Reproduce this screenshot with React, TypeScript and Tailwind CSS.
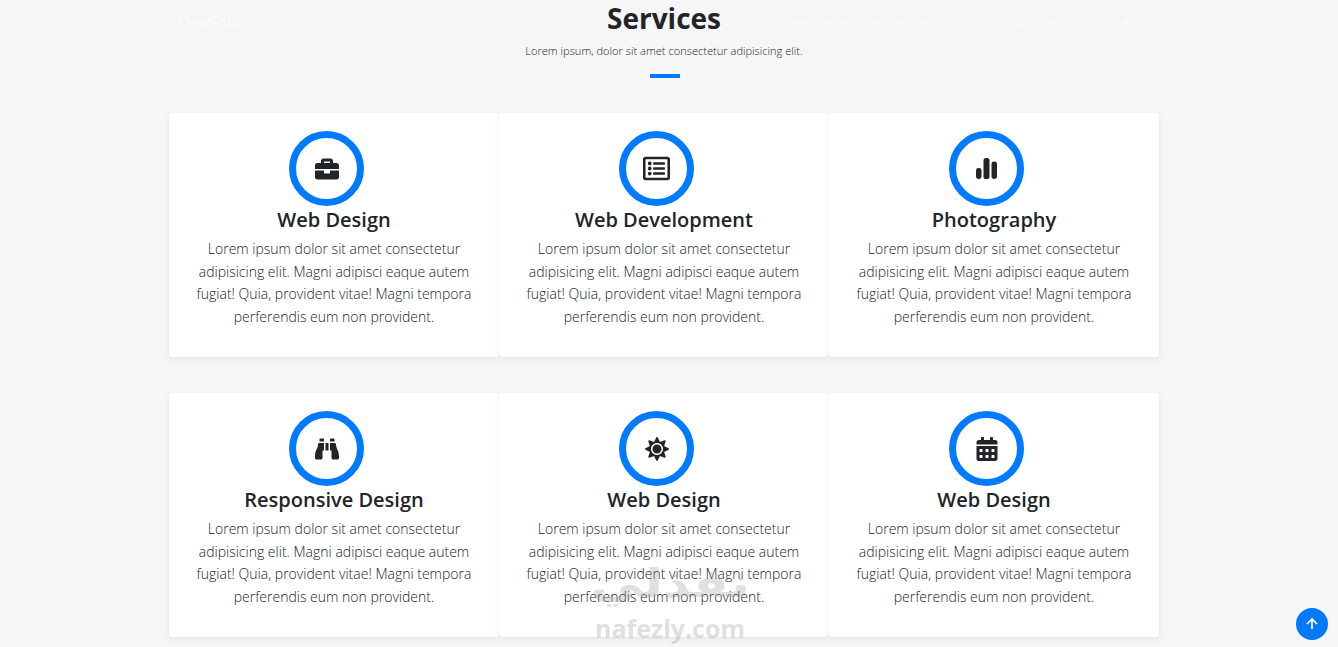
import type { ComponentType } from "react";
import { BiUpArrowAlt } from "react-icons/bi";
import { FaBinoculars, FaBriefcase, FaCalendarAlt, FaRegListAlt, FaSun } from "react-icons/fa";

const body = "Lorem ipsum dolor sit amet consectetur adipisicing elit. Magni adipisci eaque autem fugiat! Quia, provident vitae! Magni tempora perferendis eum non provident.";

function BarsIcon({ className }: { className?: string }) {
  return (
    <svg viewBox="0 0 21 21" fill="currentColor" width="21" height="21" className={className}>
      <rect x="0" y="10" width="5.5" height="11" rx="2.4" />
      <rect x="7.5" y="0" width="6" height="21" rx="2.6" />
      <rect x="15.5" y="3.5" width="5.5" height="17.5" rx="2.4" />
    </svg>
  );
}

const services: { title: string; Icon: ComponentType<{ className?: string }>; size: string }[] = [
  { title: "Web Design", Icon: FaBriefcase, size: "text-[24px]" },
  { title: "Web Development", Icon: FaRegListAlt, size: "text-[27px]" },
  { title: "Photography", Icon: BarsIcon, size: "" },
  { title: "Responsive Design", Icon: FaBinoculars, size: "text-[24px]" },
  { title: "Web Design", Icon: FaSun, size: "text-[24px]" },
  { title: "Web Design", Icon: FaCalendarAlt, size: "text-[24px]" },
];

const links = ["Home", "About", "Services", "Work", "BLOG"];

function ServiceCard({ title, Icon, size }: { title: string; Icon: ComponentType<{ className?: string }>; size: string }) {
  return (
    <div className="h-[244px] rounded-[4px] bg-white px-5 pt-[18px] text-center shadow-[0_2px_6px_rgba(0,0,0,0.07)]">
      <div className="ml-[100px] flex h-[75px] w-[75px] items-center justify-center rounded-full border-[7px] border-[#007bff] text-[#212529]">
        <Icon className={size} />
      </div>
      <h3 className="text-[20px] leading-[27px] font-semibold text-[#212529]">{title}</h3>
      <p className="mt-[5px] text-[14px] leading-[22.5px] font-light text-[#212529]">{body}</p>
    </div>
  );
}

export default function App() {
  return (
    <div className="relative h-[647px] overflow-hidden bg-[#f6f6f7] font-['Open_Sans',sans-serif]">
      <nav className="absolute top-[12px] left-[178px] flex w-[965px] items-center justify-between text-white">
        <span className="text-[17px] leading-[20px] opacity-70">DevFolio</span>
        <ul className="flex items-center gap-[11px] text-[11.5px] leading-[20px] opacity-70">
          {links.map((link) => (
            <li key={link}>{link}</li>
          ))}
          <li className="mr-[6px]">Drop Down ⌄</li>
          <li>CONTACT</li>
        </ul>
      </nav>

      <div className="ml-[169px] w-[990px]">
        <div className="flex flex-col items-center">
          <h2 className="-mt-[1px] text-[28px] leading-[38px] font-bold text-[#212529]">Services</h2>
          <p className="mt-[5px] text-[11.1px] leading-[18px] font-light text-[#212529]">Lorem ipsum, dolor sit amet consectetur adipisicing elit.</p>
          <div className="mt-[14px] ml-[2px] h-[4px] w-[30px] bg-[#007bff]" />
        </div>
        <div className="mt-[35px] grid grid-cols-3 gap-y-[36px]">
          {services.map((service, i) => (
            <ServiceCard key={i} title={service.title} Icon={service.Icon} size={service.size} />
          ))}
        </div>
      </div>

      <div className="absolute top-[552px] left-[590px] flex w-[160px] flex-col items-center text-[#9a9a9a] opacity-30">
        <span className="scale-x-[1.3] font-['DejaVu_Sans',sans-serif] text-[40px] leading-[62px] font-bold">نفذلي</span>
        <span className="text-[25px] leading-[28px] font-bold">nafezly.com</span>
      </div>

      <div className="absolute top-[608px] left-[1296px] flex h-8 w-8 items-center justify-center rounded-full bg-[#007bff] text-white">
        <BiUpArrowAlt className="text-[20px]" />
      </div>
    </div>
  );
}
